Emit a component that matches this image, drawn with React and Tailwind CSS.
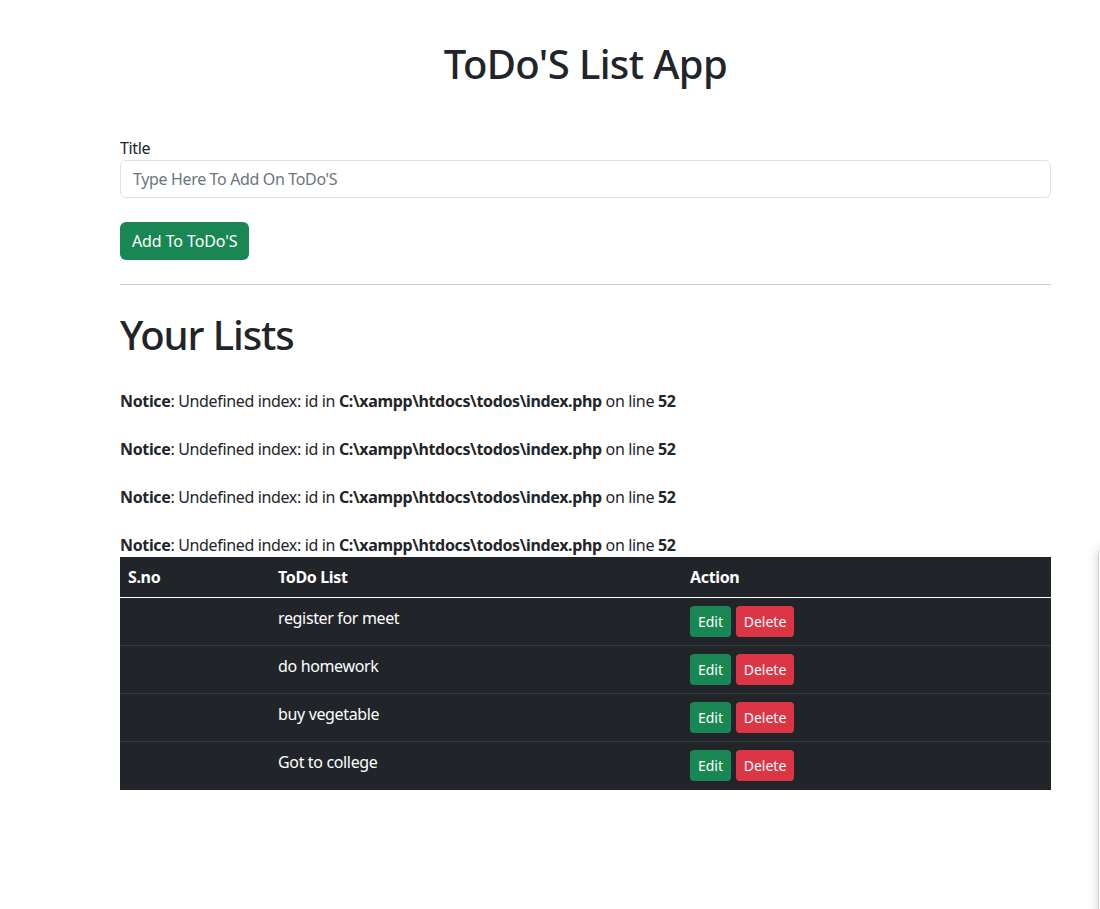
import React from "react";

const font = { fontFamily: '"Noto Sans", "Liberation Sans", sans-serif' };

function Notice() {
  return (
    <div className="leading-6">
      <br />
      <b>Notice</b>: Undefined index: id in <b>C:\xampp\htdocs\todos\index.php</b> on line <b>52</b>
    </div>
  );
}

const todos = ["register for meet", "do homework", "buy vegetable", "Got to college"];

export default function App() {
  return (
    <div className="relative min-h-[909px] bg-white text-[#212529] text-[16px] tracking-[-0.35px] overflow-hidden" style={font}>
      <div className="ml-[120px] w-[931px] pt-[40px]">
        <h1 className="text-center text-[40px] leading-[48px] font-medium mb-[48px] tracking-[-0.6px]">ToDo'S List App</h1>
        <label className="block leading-6">Title</label>
        <div className="h-[38px] border border-[#dee2e6] rounded-[6px] px-[12px] flex items-center text-[#6c757d]">
          Type Here To Add On ToDo'S
        </div>
        <button className="mt-[24px] h-[38px] px-[12px] rounded-[6px] bg-[#198754] text-white leading-6 tracking-[-0.1px]">
          Add To ToDo'S
        </button>
        <hr className="mt-[24px] border-t border-[#c8cacc]" />
        <h1 className="mt-[26px] text-[40px] leading-[48px] font-medium tracking-[-1.1px]">Your Lists</h1>
        <div className="mt-[6px]">
          <Notice />
          <Notice />
          <Notice />
          <Notice />
        </div>
        <table className="w-full bg-[#212529] text-white border-collapse">
          <thead>
            <tr className="border-b border-white">
              <th className="text-left font-bold p-[8px] h-[40px] w-[150px]">S.no</th>
              <th className="text-left font-bold p-[8px] w-[412px]">ToDo List</th>
              <th className="text-left font-bold p-[8px]">Action</th>
            </tr>
          </thead>
          <tbody>
            {todos.map((t, i) => (
              <tr key={i} className={i < todos.length - 1 ? "border-b border-[#373b3e]" : ""}>
                <td className="p-[8px] align-top h-[48px]"></td>
                <td className="p-[8px] align-top">{t}</td>
                <td className="p-[8px] align-top">
                  <div className="flex gap-[5px]">
                    <button className="h-[31px] w-[41px] rounded-[4px] bg-[#198754] text-white text-[14px] tracking-normal">Edit</button>
                    <button className="h-[31px] w-[58px] rounded-[4px] bg-[#dc3545] text-white text-[14px] tracking-normal">Delete</button>
                  </div>
                </td>
              </tr>
            ))}
          </tbody>
        </table>
      </div>
      <div className="absolute left-[1098px] top-[548px] w-[20px] h-[400px] bg-white rounded-tl-[8px] shadow-[0_0_12px_rgba(0,0,0,0.18)] border-l border-[#d0d0d0]"></div>
    </div>
  );
}
